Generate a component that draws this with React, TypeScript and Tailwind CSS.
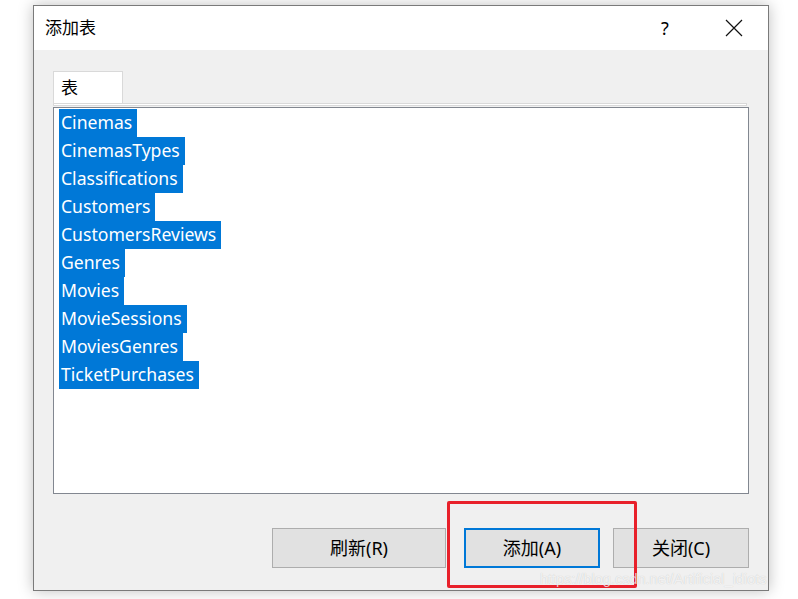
const tables = [
  "Cinemas",
  "CinemasTypes",
  "Classifications",
  "Customers",
  "CustomersReviews",
  "Genres",
  "Movies",
  "MovieSessions",
  "MoviesGenres",
  "TicketPurchases",
];

const font = {
  fontFamily: '"Noto Sans", "Noto Sans CJK SC", sans-serif',
};

export default function App() {
  return (
    <div
      className="relative w-[798px] h-[599px] overflow-hidden bg-white pt-[5px] pl-[33px]"
      style={font}
    >
      {/* dialog window */}
      <div className="flex flex-col w-[736px] h-[586px] border border-[#7a7a7a] shadow-[0_0_14px_rgba(0,0,0,0.25)]">
        {/* title bar */}
        <div className="flex items-center h-[44px] bg-white pl-[11px] text-[17px] text-black">
          <span className="flex-1">添加表</span>
          <span className="w-[20px] text-center text-[18px] mr-[50px]">?</span>
          <svg width="18" height="18" viewBox="0 0 18 18" className="mr-[25px]">
            <path d="M1 1 L17 17 M17 1 L1 17" stroke="#111" strokeWidth="1.2" />
          </svg>
        </div>

        {/* body */}
        <div className="flex-1 flex flex-col bg-[#f0f0f0] pl-[19px] pr-[19px] pt-[21px]">
          {/* tab strip */}
          <div className="flex items-end">
            <div className="flex items-center w-[70px] h-[32px] bg-white border border-b-0 border-[#d9d9d9] pl-[7px] text-[17px] text-black">
              表
            </div>
          </div>
          <div className="h-[3px] mr-[2px] border border-[#d9d9d9] bg-white" />

          {/* list box */}
          <div className="mt-[1px] h-[387px] bg-white border border-[#828790] pt-[1px] pl-[5px]">
            {tables.map((t) => (
              <div key={t} className="flex">
                <span className="h-[28px] leading-[27px] bg-[#0078d7] text-white text-[17.6px] pl-[2px] pr-[5px]">
                  {t}
                </span>
              </div>
            ))}
          </div>

          {/* buttons */}
          <div className="flex justify-end mt-[34px] text-[18px] text-black">
            <button className="w-[174px] h-[40px] bg-[#e1e1e1] border border-[#adadad]">
              刷新(R)
            </button>
            <button className="ml-[18px] w-[136px] h-[40px] bg-[#e1e1e1] border-2 border-[#0078d7]">
              添加(A)
            </button>
            <button className="ml-[13px] w-[136px] h-[40px] bg-[#e1e1e1] border border-[#adadad]">
              关闭(C)
            </button>
          </div>
        </div>
      </div>

      {/* red annotation box */}
      <div className="absolute left-[447px] top-[501px] w-[190px] h-[87px] border-[3px] border-[#e8202a] rounded-[2px]" />

      {/* watermark */}
      <div
        className="absolute left-[540px] top-[570px] text-[14.5px] leading-[18px] text-white/75"
        style={{ fontFamily: '"Liberation Sans", Arial, sans-serif', textShadow: "0 0 1px rgba(0,0,0,0.2)" }}
      >
        https://blog.csdn.net/Artificial_idiots
      </div>
    </div>
  );
}
